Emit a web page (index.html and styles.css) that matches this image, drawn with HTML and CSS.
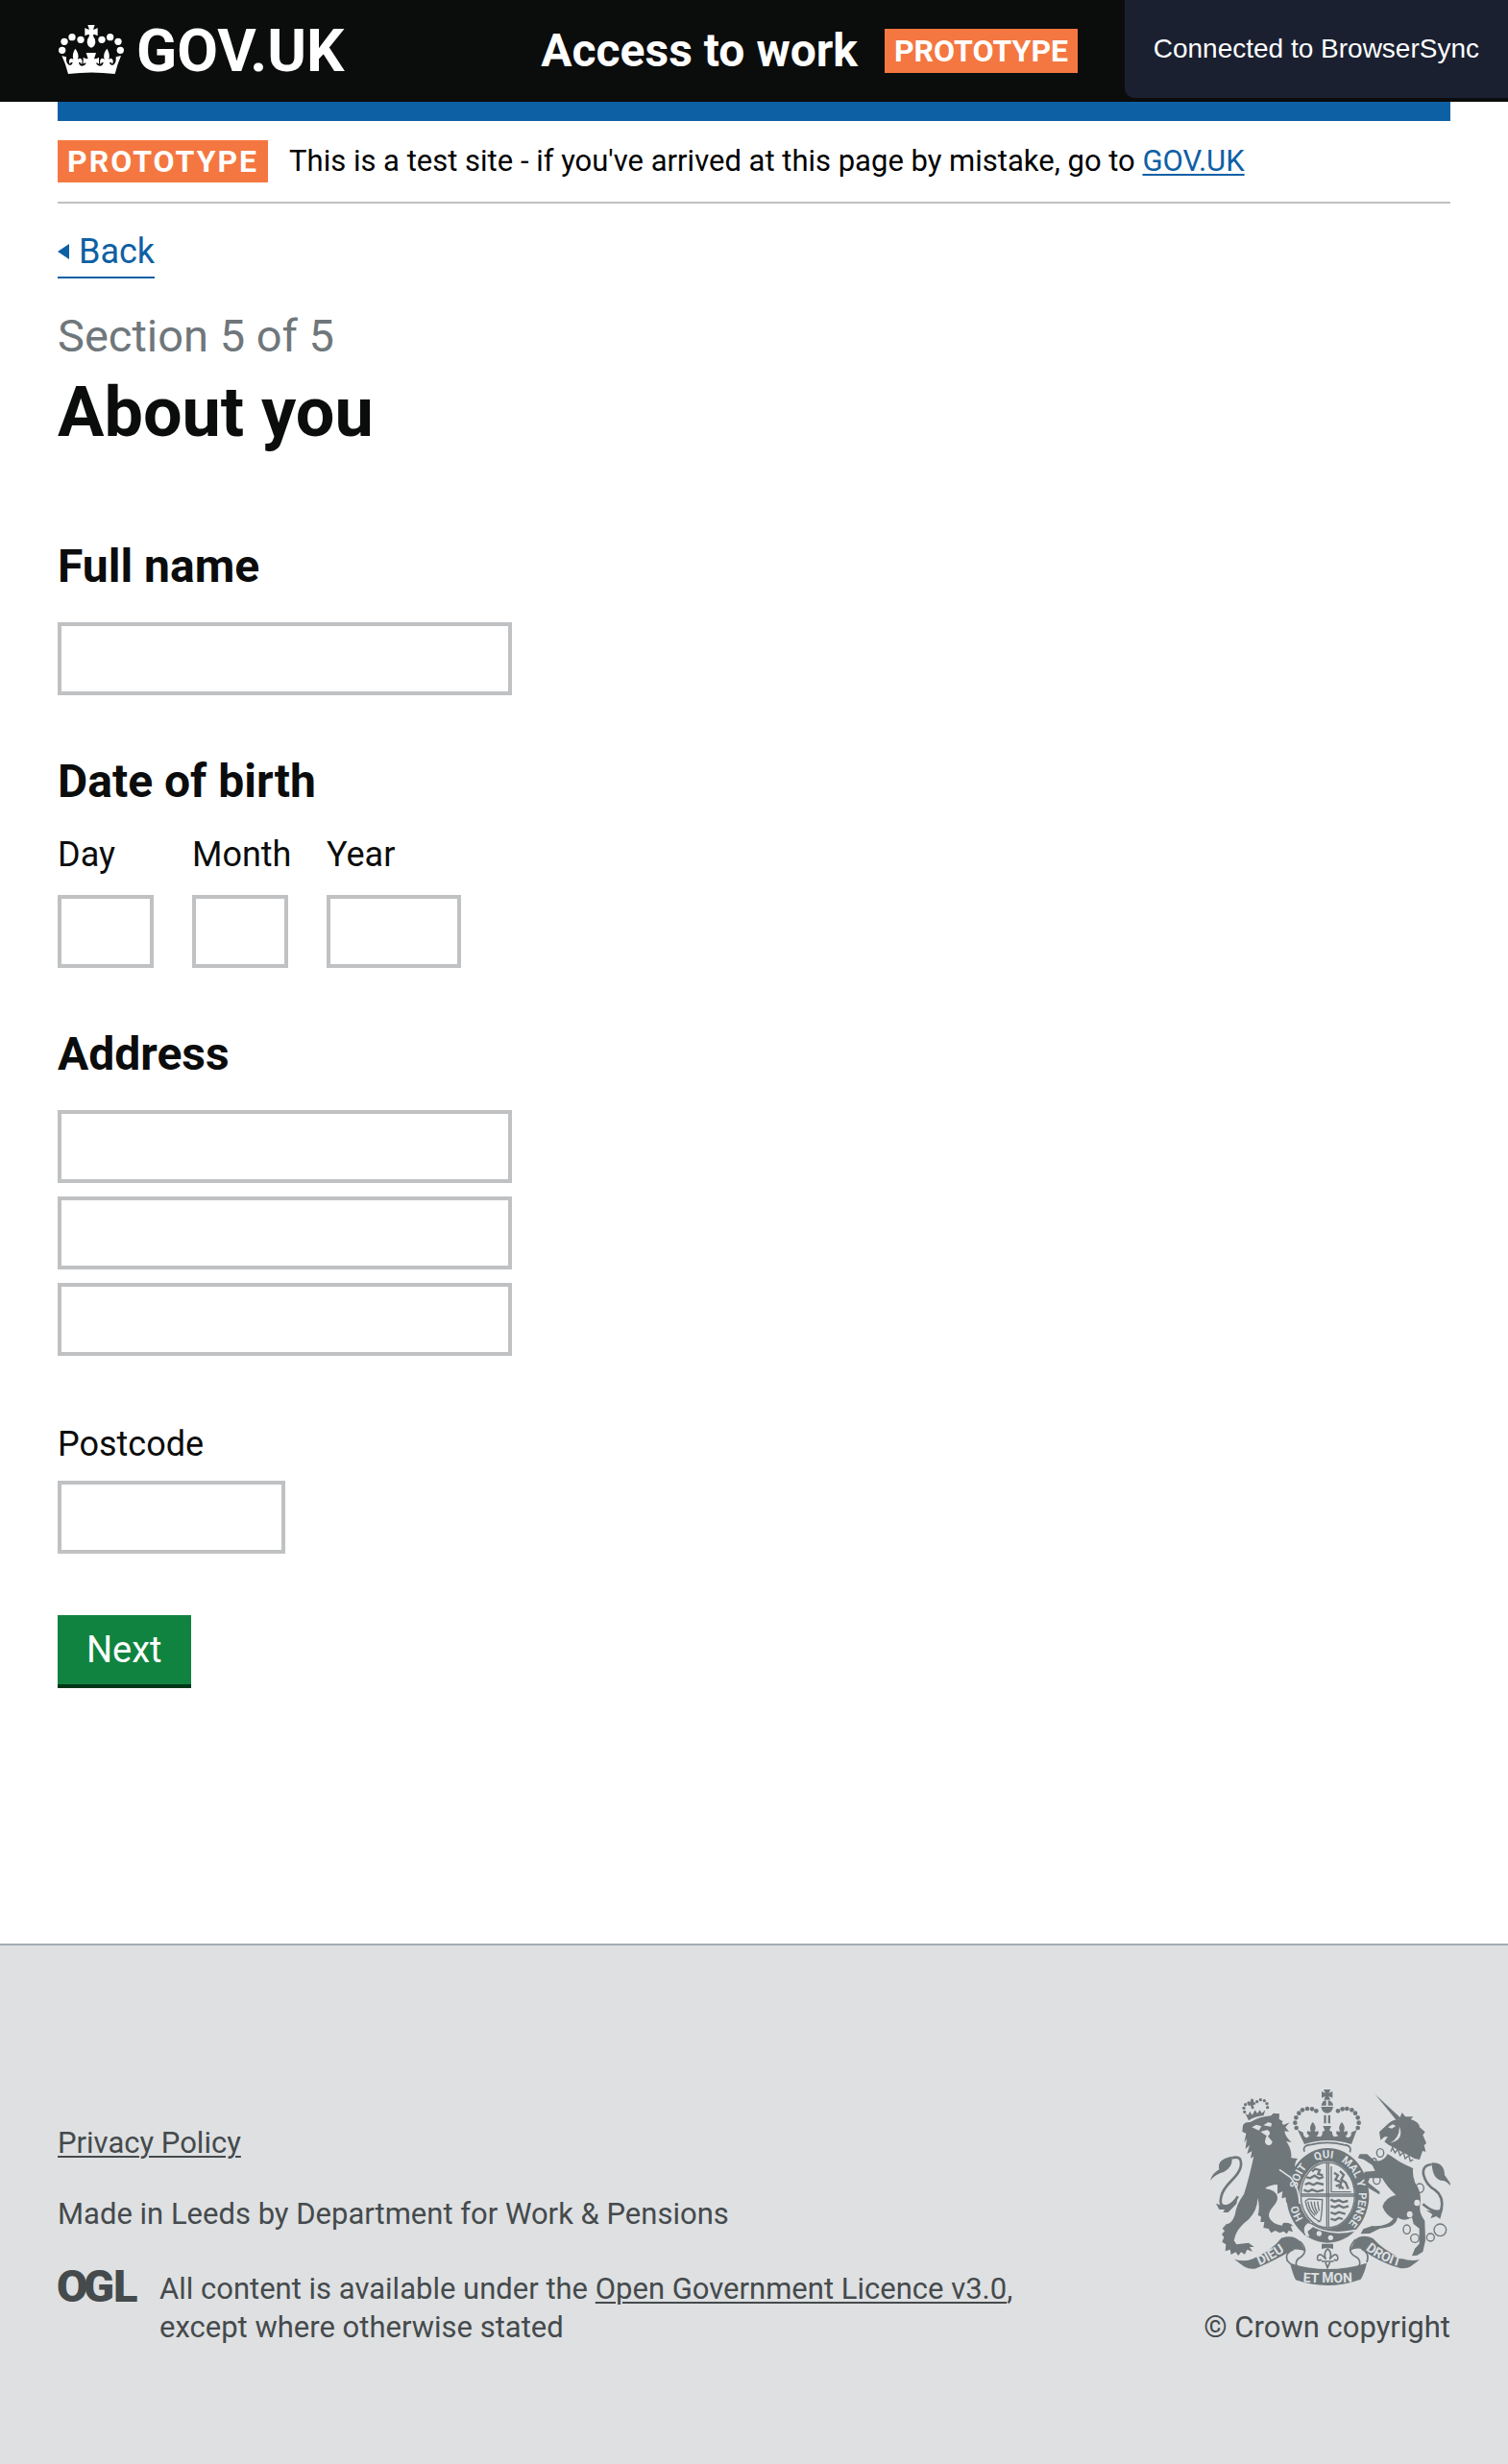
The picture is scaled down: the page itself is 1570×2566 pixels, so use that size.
FILE: index.html
```html
<!DOCTYPE html>
<html lang="en">
<head>
<meta charset="utf-8">
<meta name="viewport" content="width=device-width, initial-scale=1">
<title>About you - Access to work</title>
<link rel="stylesheet" href="styles.css">
</head>
<body>
<header class="site-header">
  <div class="wrapper site-header__grid">
    <a class="logo" href="#">
      <svg class="logo__crown" viewBox="60 36 210 186" aria-hidden="true">
        <g fill="#fff">
          <circle cx="74" cy="127" r="11"/><circle cx="81" cy="100" r="11"/><circle cx="105" cy="86" r="11"/><circle cx="132" cy="94" r="11"/>
          <circle cx="198" cy="94" r="11"/><circle cx="224" cy="86" r="11"/><circle cx="249" cy="100" r="11"/><circle cx="256" cy="127" r="11"/>
          <path d="M154 48h22l-5 14q7 0 14-5v25q-7-5-14-5l1 8q7 8 6 18-2 14-13 16-11-2-13-16-1-10 6-18l1-8q-7 0-14 5V57q7 5 14 5z"/>
          <path d="M71 144l16 4q-2 24 12 26 8-2 8-10-8 0-9 6-6-14 4-18 5 1 7 4-5-18 6-34 14 16 8 34 3-4 8-4 9 5 4 19-3-7-9-7 1 10 9 12 10 0 14-9-6-1-9 4v-22q7 5 15 5l-6-19h31l-6 19q8 0 15-5v22q-3-5-9-4 4 9 14 9 8-2 9-12-6 0-9 7-5-14 4-19 5 0 8 4-6-18 8-34 11 16 6 34 2-3 7-4 10 4 4 18-1-6-9-6 0 8 8 10 14-2 12-26l16-4q-12 28-19 57-73-9-146 0-7-29-20-57z"/>
        </g>
      </svg>
      <span class="logo__text">GOV.UK</span>
    </a>
    <div class="service">
      <a class="service__name" href="#">Access to work</a>
      <strong class="tag">PROTOTYPE</strong>
    </div>
  </div>
  <div class="sync-notice" role="status">Connected to BrowserSync</div>
</header>

<main class="wrapper main">
  <div class="colour-bar"></div>
  <div class="phase-banner">
    <strong class="tag tag--spaced">PROTOTYPE</strong>
    <span>This is a test site - if you've arrived at this page by mistake, go to <a href="#">GOV.UK</a></span>
  </div>
  <a class="back-link" href="#">Back</a>
  <h1 class="title"><span class="title__section">Section 5 of 5</span>About you</h1>

  <form class="form">
    <div class="form__group">
      <label class="heading" for="name">Full name</label>
      <input class="field field--half" id="name" type="text">
    </div>
    <fieldset class="form__group">
      <legend class="heading heading--close">Date of birth</legend>
      <div class="date">
        <div class="date__item"><label class="label" for="day">Day</label><input class="field" id="day" type="text"></div>
        <div class="date__item"><label class="label" for="month">Month</label><input class="field" id="month" type="text"></div>
        <div class="date__item date__item--year"><label class="label" for="year">Year</label><input class="field" id="year" type="text"></div>
      </div>
    </fieldset>
    <fieldset class="form__group">
      <legend class="heading">Address</legend>
      <div class="address">
        <input class="field field--half" type="text" aria-label="Address line 1">
        <input class="field field--half" type="text" aria-label="Address line 2">
        <input class="field field--half" type="text" aria-label="Address line 3">
      </div>
    </fieldset>
    <div class="form__group form__group--postcode">
      <label class="label" for="postcode">Postcode</label>
      <input class="field field--quarter" id="postcode" type="text">
    </div>
    <button class="button" type="button">Next</button>
  </form>
</main>

<footer class="footer">
  <div class="wrapper footer__grid">
    <div class="footer__meta">
      <p><a href="#">Privacy Policy</a></p>
      <p>Made in Leeds by Department for Work &amp; Pensions</p>
      <div class="licence">
        <svg class="licence__logo" viewBox="0 0 82 36" role="img" aria-label="Open Government Licence">
          <text class="licence__letters" x="-1 27 58" y="33">OGL</text>
        </svg>
        <p>All content is available under the <a href="#">Open Government Licence v3.0</a>, except where otherwise stated</p>
      </div>
    </div>
    <a class="copyright" href="#">
      <svg class="crest" viewBox="60 48 750 612" aria-hidden="true">
        <defs>
          <path id="garter" d="M351 452A97 117 0 1 1 473 482"/>
          <path id="dieu" d="M199 603Q246 588 306 544"/>
          <path id="droit" d="M535 540Q590 588 664 604"/>
          <path id="etmon" d="M326 648Q427 656 528 648"/>
        </defs>
        <g class="crest__ink">
          <!-- small crown on the lion -->
          <g><circle cx="167" cy="118" r="5"/><circle cx="165" cy="106" r="5"/><circle cx="170" cy="95" r="5"/><circle cx="180" cy="90" r="5"/><circle cx="206" cy="86" r="5"/><circle cx="217" cy="80" r="5"/><circle cx="229" cy="83" r="5"/><circle cx="237" cy="92" r="5"/><circle cx="239" cy="104" r="5"/></g>
          <path d="M188 76l8 4-1 7 7 2-2 7-6-1 3 12-8 2-3-12-6 3-3-8 7-2zM169 122l9 6 6-12 7 12 9-16 7 11 8-11 6 10 11-10-5 17q-28 3-47 16z"/>
          <!-- lion -->
          <path d="M162 160Q168 148 185 150Q215 132 250 130L257 122L276 124L275 140L287 148Q280 155 290 158L308 151L295 166L306 180L293 178Q290 190 314 213L297 210Q315 232 313 262L333 264Q322 275 325 292L310 320Q338 355 337 400L322 394L316 405L308 393L297 402L296 385L283 388L286 366L270 374V345Q245 346 231 357Q270 362 270 389C266 412 238 424 244 447Q252 468 284 473L288 465Q310 462 319 475L311 474L318 493L305 489L299 499L289 491L277 496L263 489L250 496L242 483L226 480L229 462L217 462L219 446L209 440Q216 415 208 387Q208 425 180 454Q140 483 134 520L142 532L180 527L197 540L183 540L192 554L175 548L168 563L156 556L148 567L139 556L125 564L122 548L107 553L109 532L97 524L103 509L96 500L105 490L98 482L110 469Q128 466 137 440Q142 405 165 376Q181 325 196 257L186 263L190 241L175 249L183 222L170 234L174 202L166 214L172 185L160 180Z"/>
          <!-- unicorn -->
          <path d="M575 63L656 138L642 145Z"/>
          <path d="M592 206L588 181L612 158Q630 141 650 142L659 120L669 133L694 133L686 141Q712 148 714 166L731 181L724 190L735 216L728 222L733 242L723 240L714 267L699 264L617 221L604 211L615 196L604 196Z"/>
          <path d="M616 246Q650 280 694 292Q690 315 700 340Q722 370 715 410Q712 435 730 458L732 520L724 555L706 566L690 568L699 545L713 530V482L695 468L690 448Q665 462 645 448Q640 480 590 482L558 498L530 499L538 484L566 474Q612 478 632 452Q608 440 598 414Q608 384 640 378Q610 350 597 325L558 325L553 338L575 356L590 368L588 376L555 356L536 328L542 305L575 302L566 284L540 267L521 262L527 250L550 250L572 270Q600 278 616 246Z"/>
          <!-- tail tufts -->
          <path d="M60 333Q65 310 88 298Q80 265 128 257Q132 290 102 306Q76 312 60 333ZM78 404L100 412L122 405L146 380L142 405L116 432L100 432L105 423L88 423ZM752 277Q791 275 792 315L809 340V349Q800 332 780 332Q753 325 752 277ZM787 419L778 452L766 444L748 451L754 438L734 425Q765 430 787 419Z"/>
          <!-- large crown -->
          <path d="M414 48H436L430 59L442 54V74L430 69L435 80H415L420 69L408 74V54L420 59ZM407 98Q410 82 422 82V98ZM428 82Q442 84 444 98H428ZM406 102H444Q440 122 425 122Q410 122 406 102ZM415 128H422V154H415ZM428 128H435V154H428Z"/>
          <g><circle cx="391" cy="115" r="7"/><circle cx="378" cy="109" r="7"/><circle cx="363" cy="108" r="7"/><circle cx="348" cy="112" r="7"/><circle cx="337" cy="122" r="7"/><circle cx="328" cy="136" r="7"/><circle cx="325" cy="152" r="7"/><circle cx="329" cy="168" r="7"/><circle cx="459" cy="115" r="7"/><circle cx="473" cy="109" r="7"/><circle cx="487" cy="108" r="7"/><circle cx="502" cy="112" r="7"/><circle cx="513" cy="122" r="7"/><circle cx="521" cy="136" r="7"/><circle cx="524" cy="152" r="7"/><circle cx="521" cy="168" r="7"/></g>
          <path d="M333 174L350 182Q350 196 362 199L370 193Q358 186 364 178L374 180Q368 163 380 150Q394 163 386 180L397 178Q401 188 391 194L404 196Q412 190 410 180L418 176L412 162H438L432 176L441 180Q440 192 448 196L461 193Q450 187 455 178L465 180Q458 163 471 150Q484 163 477 180L488 178Q492 188 482 194L490 199Q503 195 500 182L518 174L501 219Q427 195 354 219Z"/>
          <!-- garter -->
          <path fill-rule="evenodd" d="M427 231C500 231 556 300 556 379S500 527 427 527S298 458 298 379S354 231 427 231ZM427 272C380 272 339 320 339 379S380 482 427 482S513 436 513 379S474 272 427 272Z"/>
          <!-- ribbon -->
          <path d="M135 578Q165 588 190 578Q252 552 282 512Q320 500 340 522L357 553Q338 546 320 548Q255 585 203 607Q185 612 165 601ZM714 580Q685 586 658 576Q600 550 568 513Q535 498 514 516L496 552Q515 542 532 546Q590 590 655 607Q680 608 690 598ZM309 590Q425 628 549 590Q542 622 530 641Q427 678 327 643Q318 625 309 590Z"/>
          <path d="M408 530H444V546L427 542L408 546Z"/>
        </g>
        <g class="crest__line" stroke-width="8"><path d="M128 262Q162 252 155 290C148 325 104 340 95 380Q84 420 118 410Q138 400 146 382"/><path d="M752 282C705 285 728 342 762 362Q793 385 780 428Q758 435 724 406"/></g>
        <path class="crest__line" stroke-width="5" d="M354 242Q347 222 375 220Q427 208 478 221Q504 223 496 244"/>
        <!-- shield quarters -->
        <g class="crest__line" stroke-width="4"><ellipse cx="427" cy="378" rx="84" ry="102"/><path d="M424 276V478M430 276V478M343 375H511M343 381H511"/><path d="M357 396L368 390L410 392Q410 425 405 456L396 462M357 396Q366 445 404 462M365 398Q370 428 388 442M375 398Q378 422 392 438M385 398Q386 420 396 434M395 398L400 428M438 288V368H500"/></g>
        <g class="crest__line" stroke-width="7"><path d="M378 304l10-8 14 4-5 12 15 4M360 322l12 3 14-8 14 9 14-5M356 345l12-5 14 6 12-6 20 5M352 362l14 5 12-6 16 6 20-5M436 392l12 6 14-4 12 6 16-4M436 412l14 4 12-6 14 7 16-5M436 432l14 5 12-6 20 6M436 452l14 4 12-7 12 4M447 308l12 8-8 14 18 8-6 20M465 303l12 12-8 14 14 10 8 20M452 350l12-4 12 12"/></g>
        <g class="crest__line" stroke-width="5"><path d="M340 522Q368 550 345 570Q322 582 330 600M320 548Q292 558 300 582L312 594M514 516Q482 550 510 568Q535 580 524 600M532 546Q560 558 549 588"/><path d="M427 545Q412 560 421 578Q405 556 396 568Q390 586 408 580M427 545Q442 560 433 578Q449 556 457 568Q463 586 446 580M408 585H446M420 588L426 605L434 588"/></g>
        <g class="crest__paper">
          <path d="M190 166L204 158L220 163L212 176ZM226 160L241 150L252 154L250 164ZM238 174Q254 182 240 194L254 211Q252 224 240 222Q228 218 232 204L236 193L217 180Z"/>
          <path d="M615 166L630 157L640 162L627 170ZM650 162Q668 205 622 215Q654 198 650 162ZM361 464Q345 478 357 505L370 508L364 492L381 478L376 462Z"/>
          <ellipse cx="706" cy="402" rx="9" ry="10"/><ellipse cx="683" cy="438" rx="9" ry="10"/>
          <circle cx="400" cy="498" r="8"/><circle cx="436" cy="511" r="8"/>
        </g>
        <path class="crest__cut" stroke-width="5" d="M276 298L310 322Q338 355 339 405M372 470Q430 507 514 488M620 224L616 248L694 292L708 268"/>
        <g class="crest__line" stroke-width="4"><path d="M624 242l5-12 8 16 9-12 7 20 10-10 6 20 11-10 5 18 9-5M356 503Q342 480 365 463L383 470"/><ellipse cx="591" cy="246" rx="11" ry="13"/><ellipse cx="572" cy="273" rx="7" ry="10"/><ellipse cx="580" cy="330" rx="11" ry="14"/><ellipse cx="714" cy="356" rx="13" ry="14"/><ellipse cx="674" cy="485" rx="11" ry="14"/><circle cx="699" cy="513" r="13"/><circle cx="748" cy="510" r="12"/><circle cx="778" cy="487" r="19"/></g>
        <g class="crest__text">
          <text><textPath href="#garter">HO</textPath></text>
          <text><textPath href="#garter" startOffset="98">SOIT</textPath></text>
          <text><textPath href="#garter" startOffset="206">QUI</textPath></text>
          <text><textPath href="#garter" startOffset="288">MAL</textPath></text>
          <text><textPath href="#garter" startOffset="368">Y</textPath></text>
          <text><textPath href="#garter" startOffset="404">PENSE</textPath></text>
          <g class="crest__motto">
            <text><textPath href="#dieu" startOffset="50%">DIEU</textPath></text>
            <text><textPath href="#droit" startOffset="50%">DROIT</textPath></text>
            <text><textPath href="#etmon" startOffset="50%">ET MON</textPath></text>
          </g>
        </g>
      </svg>
      <span>© Crown copyright</span>
    </a>
  </div>
</footer>
</body>
</html>
```
FILE: styles.css
```css
* { box-sizing: border-box; }

body {
  margin: 0;
  background: #fff;
  color: #0b0c0c;
  font-family: Roboto, "Liberation Sans", sans-serif;
  font-size: 31px;
  line-height: 40px;
}

p, h1, fieldset { margin: 0; padding: 0; border: 0; }

.wrapper { margin: 0 60px; }

/* Header */
.site-header { position: relative; background: #0b0c0c; }
.site-header__grid {
  display: grid;
  grid-template-columns: 1fr 2fr;
  column-gap: 30px;
  align-items: center;
  min-height: 106px;
}
.logo {
  display: flex;
  align-items: center;
  gap: 12px;
  color: #fff;
  font-size: 62px;
  line-height: 60px;
  font-weight: 700;
  text-decoration: none;
}
.logo__crown { width: 70px; height: 62px; }
.service { display: flex; align-items: center; gap: 28px; }
.service__name {
  color: #fff;
  font-size: 48px;
  line-height: 60px;
  font-weight: 700;
  text-decoration: none;
}
.tag {
  padding: 2px 10px;
  background: #f47741;
  color: #fff;
  font-size: 32px;
  font-weight: 700;
  line-height: 42px;
}
.tag--spaced { line-height: 40px; letter-spacing: 2px; }
.sync-notice {
  position: absolute;
  top: 0;
  right: 0;
  padding: 30px;
  border-bottom-left-radius: 10px;
  background: #1b2031;
  color: #fff;
  font-family: "Liberation Sans", Arial, sans-serif;
  font-size: 28px;
  line-height: 42px;
}

/* Page */
.main { padding-bottom: 266px; }
.colour-bar { height: 20px; background: #0d60a4; }
.phase-banner {
  display: flex;
  align-items: center;
  gap: 22px;
  padding: 20px 0;
  border-bottom: 2px solid #bfc1c3;
  color: #000;
}
.phase-banner a, .back-link { color: #0d60a4; }
.phase-banner a, .footer a { text-underline-offset: 3px; text-decoration-thickness: 2px; }
.back-link {
  display: inline-flex;
  align-items: center;
  gap: 10px;
  margin-top: 30px;
  padding-bottom: 6px;
  border-bottom: 2px solid #0d60a4;
  font-size: 36px;
  text-decoration: none;
  vertical-align: top;
}
.back-link::before {
  content: "";
  border: 8px solid transparent;
  border-right: 12px solid #0d60a4;
  border-left: 0;
}
.title { margin-top: 30px; font-size: 72px; line-height: 80px; font-weight: 700; }
.title__section {
  display: block;
  margin-bottom: 10px;
  color: #6f777b;
  font-size: 47px;
  line-height: 60px;
  font-weight: 400;
}

/* Form */
.form { width: calc(100% * 2 / 3 - 20px); padding-top: 30px; }
.form__group { margin-top: 60px; }
.form__group--postcode { margin-top: 72px; }
.heading {
  display: block;
  padding: 0;
  margin-bottom: 28px;
  font-size: 48px;
  line-height: 60px;
  font-weight: 700;
}
.heading--close { margin-bottom: 26px; }
.label { display: block; margin-bottom: 18px; font-size: 36px; }
.field {
  display: block;
  width: 100%;
  height: 76px;
  padding: 8px;
  border: 4px solid #bfc1c3;
  border-radius: 0;
  background: #fff;
  font: inherit;
}
.field--half { width: 50%; }
.field--quarter { width: 25%; }
.date { display: flex; gap: 40px; }
.date__item { width: 100px; }
.date__item--year { width: 140px; }
.date .label { margin-bottom: 22px; }
.address { display: flex; flex-direction: column; gap: 14px; }
.button {
  display: block;
  margin-top: 64px;
  padding: 16px 30px;
  border: 0;
  border-bottom: 4px solid #003618;
  background: #118340;
  color: #fff;
  font-family: inherit;
  font-size: 38px;
  line-height: 40px;
}

/* Footer */
.footer {
  padding: 150px 0 122px;
  border-top: 2px solid #a1acb2;
  background: #dee0e2;
  color: #454a4c;
}
.footer a { color: #454a4c; }
.footer__grid {
  display: grid;
  grid-template-columns: 1fr auto;
  column-gap: 120px;
  align-items: end;
}
.footer__meta { display: flex; flex-direction: column; gap: 34px; }
.licence { display: flex; align-items: flex-start; gap: 24px; padding-top: 4px; }
.licence__logo { flex: none; width: 82px; height: 36px; overflow: visible; }
.licence__letters { fill: #454a4c; font-size: 47px; font-weight: 900; }
.copyright {
  display: flex;
  flex-direction: column;
  align-items: flex-end;
  gap: 24px;
  text-decoration: none;
}
.crest { width: 250px; height: 204px; overflow: visible; }
.crest__ink { fill: #6f777b; }
.crest__line { fill: none; stroke: #6f777b; }
.crest__paper { fill: #dee0e2; }
.crest__cut { fill: none; stroke: #dee0e2; }
.crest__text { fill: #dee0e2; font-size: 34px; font-weight: 700; }
.crest__motto { font-size: 42px; text-anchor: middle; }
```
